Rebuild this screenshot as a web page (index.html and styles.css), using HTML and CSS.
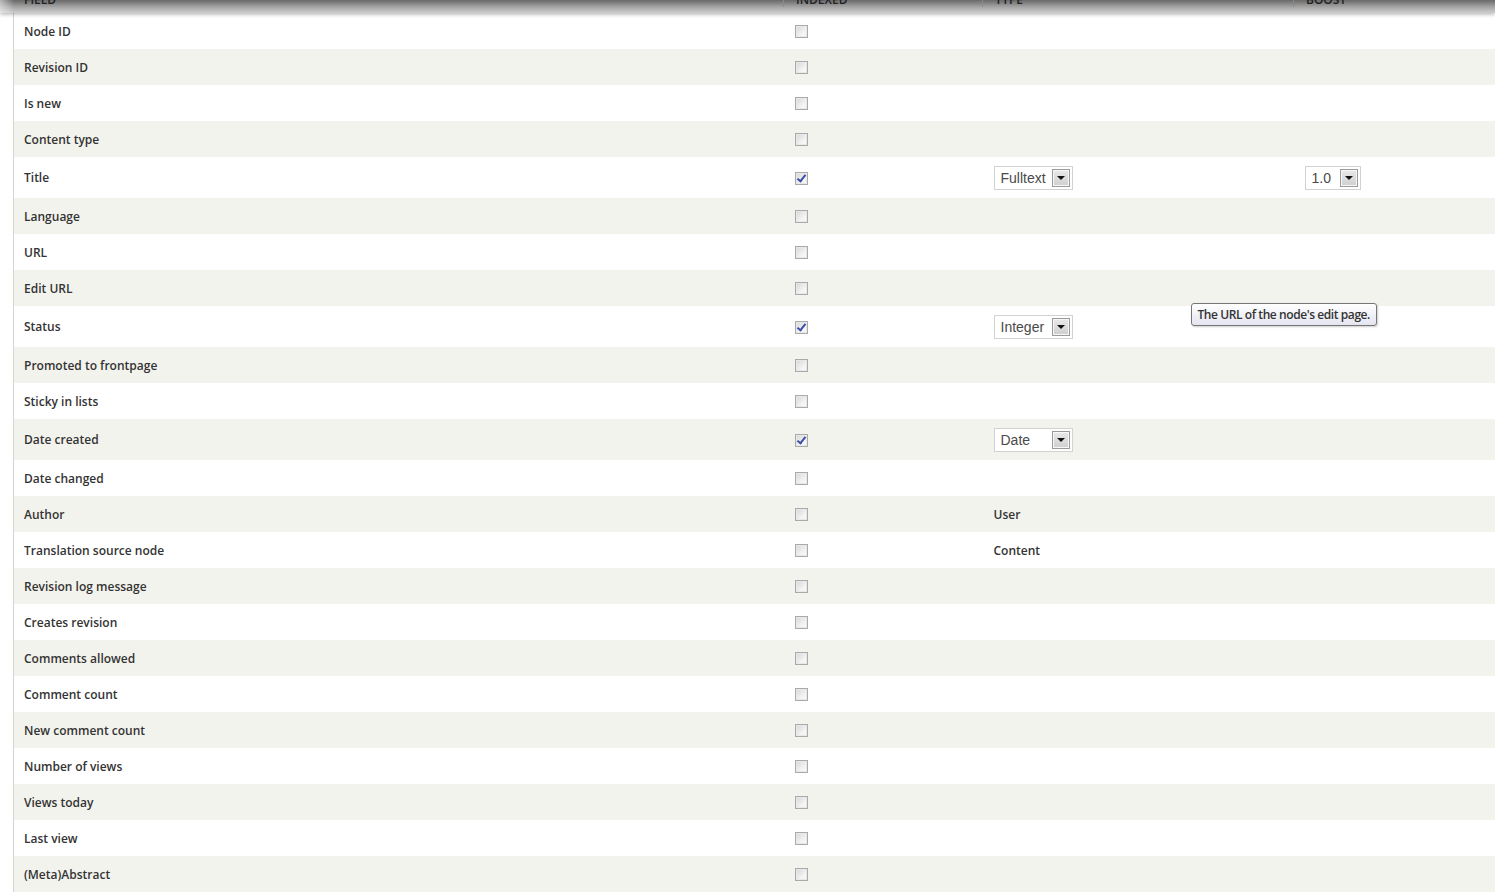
FILE: index.html
```html
<!DOCTYPE html>
<html lang="en">
<head>
<meta charset="utf-8">
<title>Fields</title>
<link rel="stylesheet" href="styles.css">
</head>
<body>
<div class="page">
  <div class="sticky-head">
    <div class="hcell c-field">FIELD</div>
    <div class="hcell c-indexed">INDEXED</div>
    <div class="hcell c-type">TYPE</div>
    <div class="hcell c-boost">BOOST</div>
  </div>
  <div class="wrap">
    <table class="fields">
      <colgroup>
        <col class="c-field"><col class="c-indexed"><col class="c-type"><col class="c-boost">
      </colgroup>
      <tbody>
        <tr class="odd"><td>Node ID</td><td><span class="cb"></span></td><td></td><td></td></tr>
        <tr class="even"><td>Revision ID</td><td><span class="cb"></span></td><td></td><td></td></tr>
        <tr class="odd"><td>Is new</td><td><span class="cb"></span></td><td></td><td></td></tr>
        <tr class="even"><td>Content type</td><td><span class="cb"></span></td><td></td><td></td></tr>
        <tr class="odd tall"><td>Title</td><td><span class="cb checked"></span></td><td><span class="sel w-type"><span class="val">Fulltext</span><span class="arrow"></span></span></td><td><span class="sel w-boost"><span class="val">1.0</span><span class="arrow"></span></span></td></tr>
        <tr class="even"><td>Language</td><td><span class="cb"></span></td><td></td><td></td></tr>
        <tr class="odd"><td>URL</td><td><span class="cb"></span></td><td></td><td></td></tr>
        <tr class="even"><td>Edit URL</td><td><span class="cb"></span></td><td></td><td></td></tr>
        <tr class="odd tall"><td>Status</td><td><span class="cb checked"></span></td><td><span class="sel w-type"><span class="val">Integer</span><span class="arrow"></span></span></td><td class="tip-cell"><span class="tooltip">The URL of the node's edit page.</span></td></tr>
        <tr class="even"><td>Promoted to frontpage</td><td><span class="cb"></span></td><td></td><td></td></tr>
        <tr class="odd"><td>Sticky in lists</td><td><span class="cb"></span></td><td></td><td></td></tr>
        <tr class="even tall"><td>Date created</td><td><span class="cb checked"></span></td><td><span class="sel w-type"><span class="val">Date</span><span class="arrow"></span></span></td><td></td></tr>
        <tr class="odd"><td>Date changed</td><td><span class="cb"></span></td><td></td><td></td></tr>
        <tr class="even"><td>Author</td><td><span class="cb"></span></td><td>User</td><td></td></tr>
        <tr class="odd"><td>Translation source node</td><td><span class="cb"></span></td><td>Content</td><td></td></tr>
        <tr class="even"><td>Revision log message</td><td><span class="cb"></span></td><td></td><td></td></tr>
        <tr class="odd"><td>Creates revision</td><td><span class="cb"></span></td><td></td><td></td></tr>
        <tr class="even"><td>Comments allowed</td><td><span class="cb"></span></td><td></td><td></td></tr>
        <tr class="odd"><td>Comment count</td><td><span class="cb"></span></td><td></td><td></td></tr>
        <tr class="even"><td>New comment count</td><td><span class="cb"></span></td><td></td><td></td></tr>
        <tr class="odd"><td>Number of views</td><td><span class="cb"></span></td><td></td><td></td></tr>
        <tr class="even"><td>Views today</td><td><span class="cb"></span></td><td></td><td></td></tr>
        <tr class="odd"><td>Last view</td><td><span class="cb"></span></td><td></td><td></td></tr>
        <tr class="even"><td>(Meta)Abstract</td><td><span class="cb"></span></td><td></td><td></td></tr>
      </tbody>
    </table>
  </div>
</div>
</body>
</html>
```
FILE: styles.css
```css
html, body {
  margin: 0;
  padding: 0;
  background: #fff;
}

body {
  font-family: "Open Sans", "DejaVu Sans", sans-serif;
  font-size: 12px;
  color: #333;
}

.page {
  position: relative;
  width: 1495px;
  height: 893px;
  overflow: hidden;
}

.sticky-head {
  position: absolute;
  top: 0;
  left: 0;
  right: 0;
  height: 13px;
  display: flex;
  padding-left: 14px;
  background: linear-gradient(#686868, #a6a6a6 55%, #cdcdcd);
  box-shadow: 0 1px 4px rgba(0, 0, 0, 0.35);
  z-index: 2;
  overflow: hidden;
}

.sticky-head::before {
  content: "";
  position: absolute;
  left: 0;
  top: 0;
  width: 14px;
  height: 13px;
  background: linear-gradient(90deg, rgba(255,255,255,0.5), rgba(255,255,255,0));
}

.hcell {
  box-sizing: border-box;
  height: 13px;
  padding-left: 10px;
  font-size: 12px;
  font-weight: 600;
  line-height: 12px;
  margin-top: -6px;
  color: #222;
  border-left: 1px solid #8a8a8a;
}

.hcell.c-field { width: 769px; border-left: 0; }
.hcell.c-indexed { width: 199px; padding-left: 12px; }
.hcell.c-type { width: 311px; padding-left: 12px; }
.hcell.c-boost { width: 202px; padding-left: 12px; }

.wrap {
  padding-top: 13px;
  padding-left: 13px;
}

.fields {
  border-collapse: collapse;
  table-layout: fixed;
  width: 1482px;
  border-left: 1px solid #d4d4d0;
}

col.c-field { width: 769px; }
col.c-indexed { width: 199px; }
col.c-type { width: 311px; }
col.c-boost { width: 203px; }

.fields td {
  height: 36px;
  padding: 0 0 0 12px;
  box-sizing: border-box;
  vertical-align: middle;
  font-weight: 600;
  white-space: nowrap;
}

.fields td:first-child { padding-left: 10px; }

.fields tr.tall td { height: 41px; }

tr.odd { background: #fff; }
tr.even { background: #f3f3ee; }

/* Checkboxes */
.cb {
  display: inline-block;
  position: relative;
  width: 11px;
  height: 11px;
  border: 1px solid #aaaaaa;
  background: linear-gradient(135deg, #d6d6d6, #f6f6f6 70%);
  box-shadow: inset 0 0 0 1px #e8e8e8;
  vertical-align: middle;
  margin-top: -1px;
}

.cb.checked::after {
  content: "";
  position: absolute;
  left: 3px;
  top: 0;
  width: 3px;
  height: 7px;
  border: solid #3a4fa8;
  border-width: 0 2px 2px 0;
  transform: rotate(38deg);
}

/* Drop-down selects */
.sel {
  display: inline-flex;
  align-items: center;
  justify-content: space-between;
  box-sizing: border-box;
  height: 24px;
  padding: 0 2px 0 6px;
  border: 1px solid #d2d2d2;
  background: #fff;
  font-family: "Liberation Sans", Arial, sans-serif;
  font-size: 14px;
  font-weight: 400;
  color: #4a4a4a;
  vertical-align: middle;
}

.sel.w-type { width: 79px; }
.sel.w-boost { width: 56px; }

.arrow {
  position: relative;
  box-sizing: border-box;
  width: 18px;
  height: 18px;
  border: 1px solid #9a9a9a;
  background: linear-gradient(#e9e9e9, #cfcfcf);
  box-shadow: inset 0 0 0 1px #f7f7f7;
}

.arrow::after {
  content: "";
  position: absolute;
  left: 4px;
  top: 6px;
  border-left: 4px solid transparent;
  border-right: 4px solid transparent;
  border-top: 4px solid #111;
}

/* Hover tooltip over the boost column */
.tip-cell { position: relative; }

.tooltip {
  position: absolute;
  left: -102px;
  top: -3px;
  box-sizing: border-box;
  height: 23px;
  padding: 0 6px;
  line-height: 21px;
  border: 1px solid #767676;
  border-radius: 3px;
  background: linear-gradient(#ffffff, #e4e5f0);
  box-shadow: 1px 1px 2px rgba(0, 0, 0, 0.2);
  font-family: "Open Sans", "DejaVu Sans", sans-serif;
  font-size: 12px;
  font-weight: 600;
  color: #333;
  letter-spacing: -0.42px;
  white-space: nowrap;
}
```
